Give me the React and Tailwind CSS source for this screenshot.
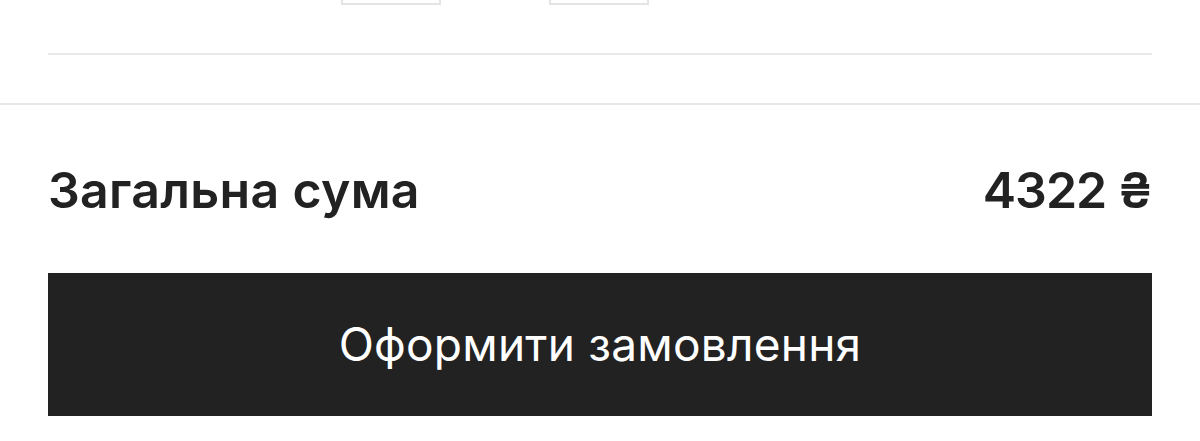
import React from 'react';

const TOTAL = 4322;

export default function App() {
  return (
    <div className="w-[1200px] h-[441px] overflow-hidden bg-white text-[#222222] font-['Inter',sans-serif]">
      {/* cart items tail */}
      <div className="border-b-2 border-[#e8e8e8]">
        <div className="px-12">
          <div className="flex h-[55px] gap-[108px] border-b-2 border-[#e8e8e8] pl-[293px]">
            <div className="-mt-[35px] h-[40px] w-[100px] border-2 border-[#e4e4e4]" />
            <div className="-mt-[35px] h-[40px] w-[100px] border-2 border-[#e4e4e4]" />
          </div>
          <div className="h-[48px]" />
        </div>
      </div>

      {/* order summary */}
      <div className="px-12 pt-[57px]">
        <div className="flex h-[56px] items-center justify-between">
          <span className="text-[50px] font-semibold leading-[56px] tracking-[0.006em]">Загальна сума</span>
          <span className="text-[50px] font-semibold leading-[56px] tracking-[-0.02em]">{TOTAL} ₴</span>
        </div>
        <button
          type="button"
          className="mt-[55px] flex h-[143px] w-full items-center justify-center bg-[#222222] text-[46px] font-normal tracking-[0.005em] text-white"
        >
          Оформити замовлення
        </button>
      </div>
    </div>
  );
}
